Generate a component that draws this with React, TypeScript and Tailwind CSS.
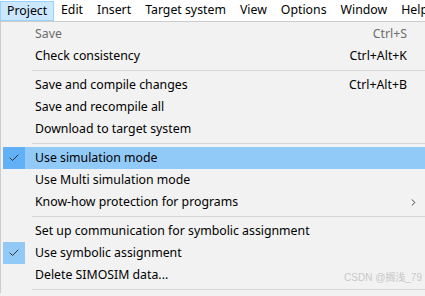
import { Check, ChevronRight } from 'lucide-react';

type Item =
  | { sep: true }
  | {
      sep?: false;
      label: string;
      shortcut?: string;
      disabled?: boolean;
      checked?: boolean;
      active?: boolean;
      submenu?: boolean;
    };

const menus = ['Edit', 'Insert', 'Target system', 'View', 'Options', 'Window', 'Help'];

const items: Item[] = [
  { label: 'Save', shortcut: 'Ctrl+S', disabled: true },
  { label: 'Check consistency', shortcut: 'Ctrl+Alt+K' },
  { sep: true },
  { label: 'Save and compile changes', shortcut: 'Ctrl+Alt+B' },
  { label: 'Save and recompile all' },
  { label: 'Download to target system' },
  { sep: true },
  { label: 'Use simulation mode', checked: true, active: true },
  { label: 'Use Multi simulation mode' },
  { label: 'Know-how protection for programs', submenu: true },
  { sep: true },
  { label: 'Set up communication for symbolic assignment' },
  { label: 'Use symbolic assignment', checked: true },
  { label: 'Delete SIMOSIM data...' },
  { sep: true },
];

export default function App() {
  return (
    <div className="relative w-[425px] h-[296px] overflow-hidden bg-[#f2f2f2] text-[12.3px] text-black font-['Noto_Sans',sans-serif]">
      {/* menu bar */}
      <div className="flex h-[21px] items-center bg-white whitespace-nowrap">
        <div className="flex h-[20px] mt-px items-center border border-[#99d1ff] bg-[#cce8ff] px-[6px] w-[54px] shrink-0">
          Project
        </div>
        {menus.map((m) => (
          <div key={m} className="px-[7px] shrink-0">
            {m}
          </div>
        ))}
      </div>

      {/* dropdown */}
      <div className="border-t border-l border-[#cccccc] pl-[2px] pt-[1px]">
        {items.map((it, i) =>
          it.sep ? (
            <div key={i} className="h-[7px] flex items-center pl-[29px]">
              <div className="h-px w-full bg-[#d7d7d7]" />
            </div>
          ) : (
            <div
              key={i}
              className={`flex h-[22px] items-center ${it.active ? 'bg-[#91c9f7]' : ''}`}
            >
              <div
                className={`flex h-[22px] w-[22px] items-center justify-center ${
                  it.checked ? (it.active ? 'bg-[#62b0f5]' : 'bg-[#91c9f7]') : ''
                }`}
              >
                {it.checked && <Check size={12} strokeWidth={2} className="text-[#333]" />}
              </div>
              <div className={`ml-[10px] flex-1 ${it.disabled ? 'text-[#6d6d6d]' : ''}`}>{it.label}</div>
              {it.shortcut && (
                <div className={`mr-[18px] ${it.disabled ? 'text-[#6d6d6d]' : ''}`}>{it.shortcut}</div>
              )}
              {it.submenu && <ChevronRight size={11} strokeWidth={2} className="mr-[6px] text-[#333]" />}
            </div>
          )
        )}
      </div>

      <div className="absolute right-[3px] bottom-[11px] text-[10px] text-[#c8c8c8] font-['Liberation_Sans','Noto_Sans_CJK_SC',sans-serif]">
        CSDN @搁浅_79
      </div>
    </div>
  );
}
